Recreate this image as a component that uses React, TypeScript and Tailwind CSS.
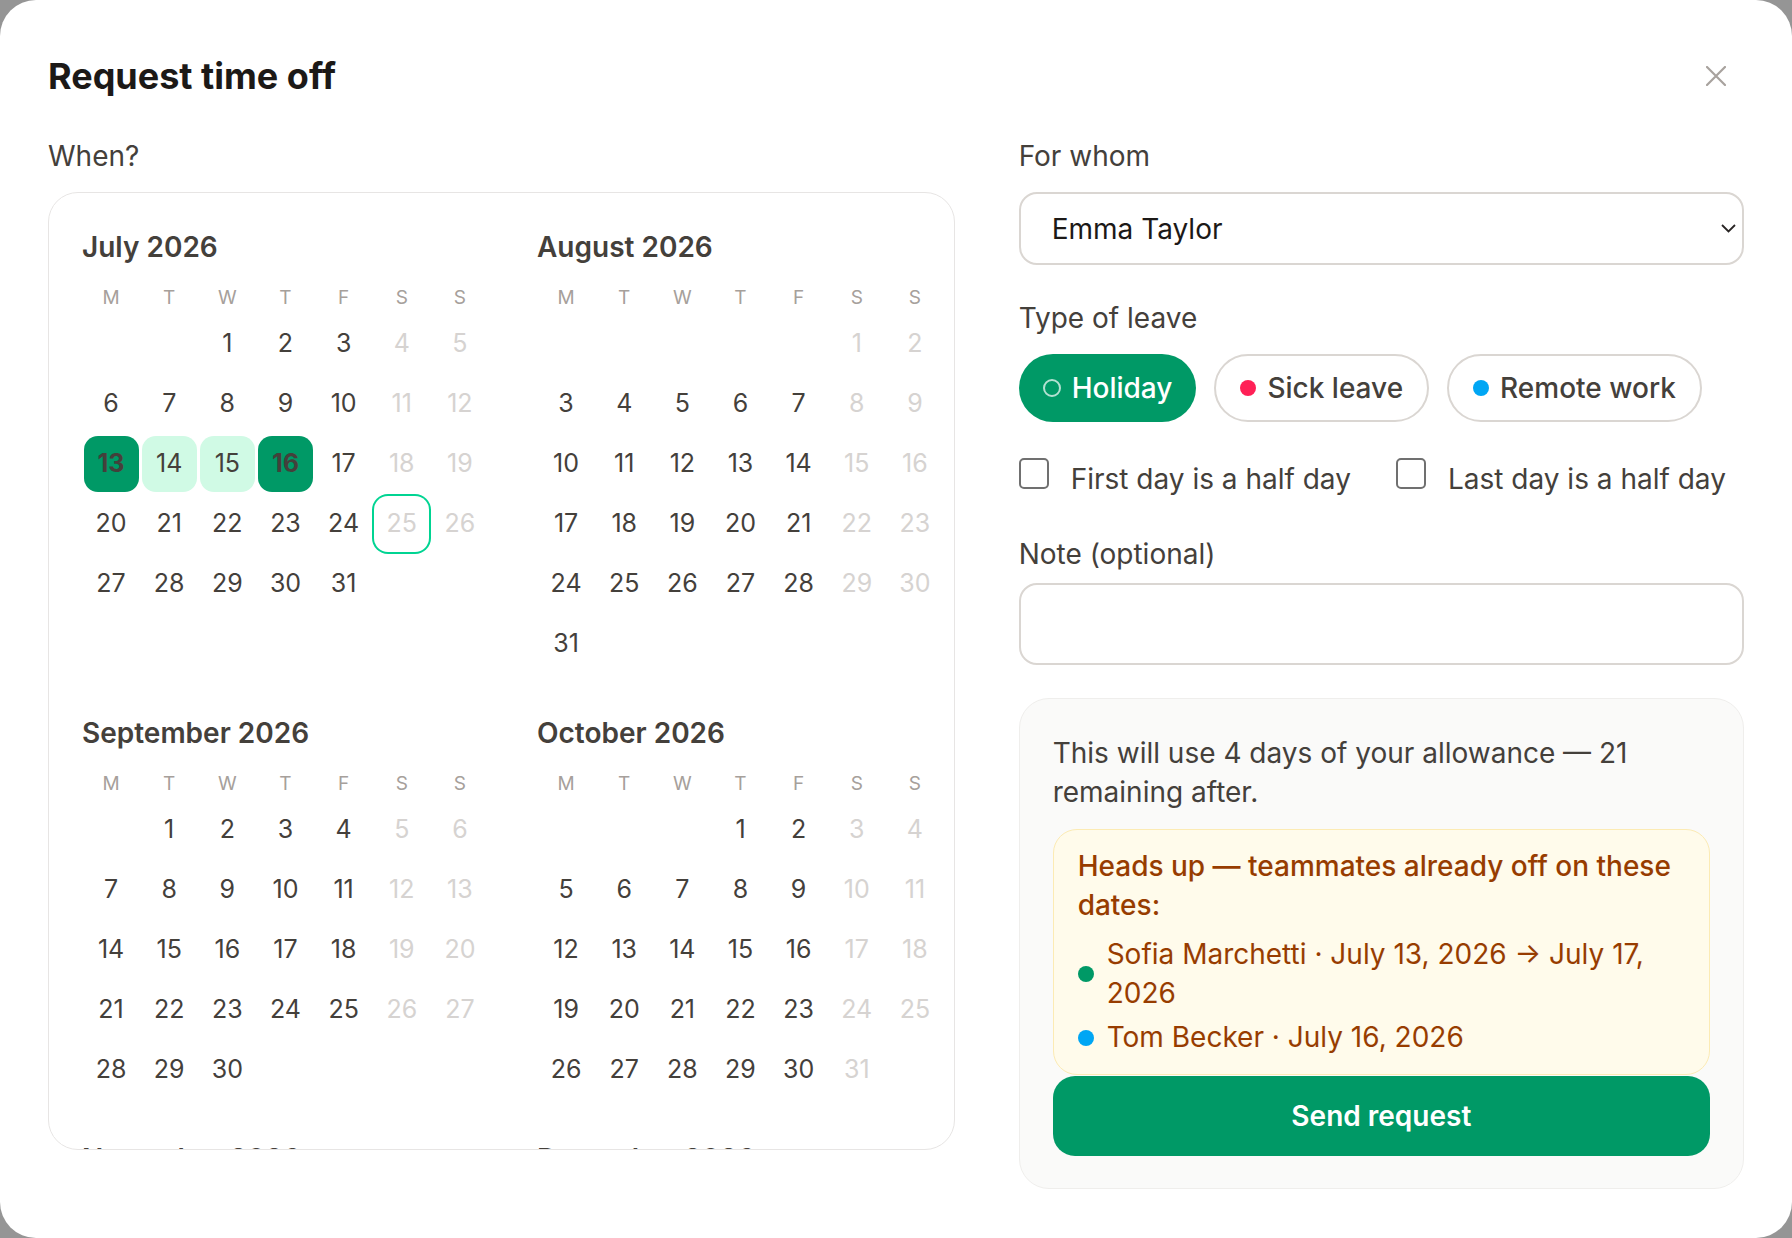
import React from "react";

type Month = { name: string; firstDow: number; days: number };

const MONTHS: Month[] = [
  { name: "July 2026", firstDow: 2, days: 31 },
  { name: "August 2026", firstDow: 5, days: 31 },
  { name: "September 2026", firstDow: 1, days: 30 },
  { name: "October 2026", firstDow: 3, days: 31 },
  { name: "November 2026", firstDow: 6, days: 30 },
  { name: "December 2026", firstDow: 1, days: 31 },
];

const WEEKDAYS = ["M", "T", "W", "T", "F", "S", "S"];

function dayClass(monthIdx: number, day: number, dow: number) {
  const weekend = dow >= 5;
  if (monthIdx === 0 && (day === 13 || day === 16)) {
    return "bg-emerald-600 font-bold text-stone-700";
  }
  if (monthIdx === 0 && (day === 14 || day === 15)) {
    return "bg-emerald-100 text-stone-700";
  }
  if (monthIdx === 0 && day === 25) {
    return "ring-2 ring-emerald-400 text-stone-300";
  }
  return weekend ? "text-stone-300" : "text-stone-700";
}

function MonthGrid({ month, idx }: { month: Month; idx: number }) {
  const cells: (number | null)[] = [];
  for (let i = 0; i < month.firstDow; i++) cells.push(null);
  for (let d = 1; d <= month.days; d++) cells.push(d);
  return (
    <div>
      <div className="text-[28px] font-semibold leading-[36px] text-stone-700">{month.name}</div>
      <div className="mt-[19px] grid grid-cols-7 gap-y-1">
        {WEEKDAYS.map((w, i) => (
          <div key={i} className="h-[28px] text-center text-[19px] leading-[28px] text-stone-400">
            {w}
          </div>
        ))}
        {cells.map((d, i) => (
          <div key={i} className="flex h-[56px] items-center justify-center">
            {d !== null && (
              <span
                className={`flex h-[56px] w-[55px] items-center justify-center rounded-[14px] text-[25px] ${dayClass(
                  idx,
                  d,
                  i % 7
                )}`}
              >
                {d}
              </span>
            )}
          </div>
        ))}
      </div>
    </div>
  );
}

function Label({ children }: { children: React.ReactNode }) {
  return <div className="h-[39px] text-[28px] leading-[39px] text-stone-700">{children}</div>;
}

function Chip({
  active,
  dot,
  children,
}: {
  active?: boolean;
  dot?: string;
  children: React.ReactNode;
}) {
  return (
    <button
      className={`flex h-[68px] items-center gap-[11px] rounded-full pl-[24px] pr-[24px] text-[28px] font-medium ${
        active ? "bg-emerald-600 text-white" : "border-2 border-[#dad6d2] bg-white text-stone-700"
      }`}
    >
      {active ? (
        <span className="h-[18px] w-[18px] rounded-full border-2 border-white/70" />
      ) : (
        <span className={`h-[16px] w-[16px] rounded-full ${dot}`} />
      )}
      {children}
    </button>
  );
}

function Check({ label }: { label: string }) {
  return (
    <label className="flex items-start gap-[22px] text-[28px] leading-[39px] text-stone-700">
      <span className="mt-[-2px] h-[31px] w-[30px] rounded-[5px] border-2 border-[#707070] bg-white" />
      {label}
    </label>
  );
}

export default function App() {
  return (
    <div className="min-h-screen w-full bg-[#959595] font-['Inter',sans-serif]">
      <div className="h-[1238px] w-full overflow-hidden rounded-[36px] bg-white px-12 pt-[56px]">
        <div className="flex h-[40px] items-center justify-between">
          <h1 className="text-[36px] font-bold leading-[40px] text-stone-900">Request time off</h1>
          <svg width="20" height="20" viewBox="0 0 20 20" className="mr-[18px]" fill="none">
            <path d="M1 1L19 19M19 1L1 19" stroke="#a8a29e" strokeWidth="2.2" strokeLinecap="round" />
          </svg>
        </div>

        <div className="mt-[41px] grid grid-cols-[1.25fr_1fr] gap-x-16">
          <div>
            <Label>When?</Label>
            <div className="mt-4 h-[958px] overflow-hidden rounded-[30px] border border-stone-200 pl-[33px] pt-[36px]">
              <div className="grid grid-cols-[407px_407px] gap-x-12 gap-y-[43px]">
                {MONTHS.map((m, i) => (
                  <MonthGrid key={m.name} month={m} idx={i} />
                ))}
              </div>
            </div>
          </div>

          <div className="flex flex-col">
            <Label>For whom</Label>
            <div className="mt-4 flex h-[73px] items-center justify-between rounded-[18px] border-2 border-[#dad6d2] pl-[31px] pr-[6px]">
              <span className="text-[28px] text-stone-900">Emma Taylor</span>
              <svg width="15" height="9" viewBox="0 0 15 9" fill="none">
                <path d="M1 1L7.5 7.5L14 1" stroke="#292524" strokeWidth="1.8" />
              </svg>
            </div>

            <div className="mt-[34px]">
              <Label>Type of leave</Label>
            </div>
            <div className="mt-4 flex gap-[18px]">
              <Chip active>Holiday</Chip>
              <Chip dot="bg-rose-500">Sick leave</Chip>
              <Chip dot="bg-sky-500">Remote work</Chip>
            </div>

            <div className="mt-[38px] flex gap-[45px]">
              <Check label="First day is a half day" />
              <Check label="Last day is a half day" />
            </div>

            <div className="mt-[36px]">
              <Label>Note (optional)</Label>
            </div>
            <div className="mt-[9px] h-[82px] rounded-[18px] border-2 border-[#dad6d2] bg-white" />

            <div className="mt-[33px] rounded-[30px] border border-[#efeeec] bg-stone-50 px-[33px] pb-[32px] pt-[35px]">
              <p className="text-[28px] leading-[39px] text-stone-700">
                This will use 4 days of your allowance — 21 remaining after.
              </p>
              <div className="mt-[17px] rounded-[24px] border border-[#fcebb4] bg-amber-50 px-[24px] py-[17px] text-amber-800">
                <p className="text-[28px] font-medium leading-[39px]">
                  Heads up — teammates already off on these dates:
                </p>
                <ul className="mt-[10px] flex flex-col gap-[5px]">
                  <li className="flex items-center gap-[13px] text-[28px] leading-[39px]">
                    <span className="h-[16px] w-[16px] shrink-0 rounded-full bg-emerald-600" />
                    <span>Sofia Marchetti · July 13, 2026 → July 17, 2026</span>
                  </li>
                  <li className="flex items-center gap-[13px] text-[28px] leading-[39px]">
                    <span className="h-[16px] w-[16px] shrink-0 rounded-full bg-sky-500" />
                    <span>Tom Becker · July 16, 2026</span>
                  </li>
                </ul>
              </div>
              <button className="mt-[1px] h-[80px] w-full rounded-[22px] bg-emerald-600 text-[28px] font-semibold text-white">
                Send request
              </button>
            </div>
          </div>
        </div>
      </div>
    </div>
  );
}
